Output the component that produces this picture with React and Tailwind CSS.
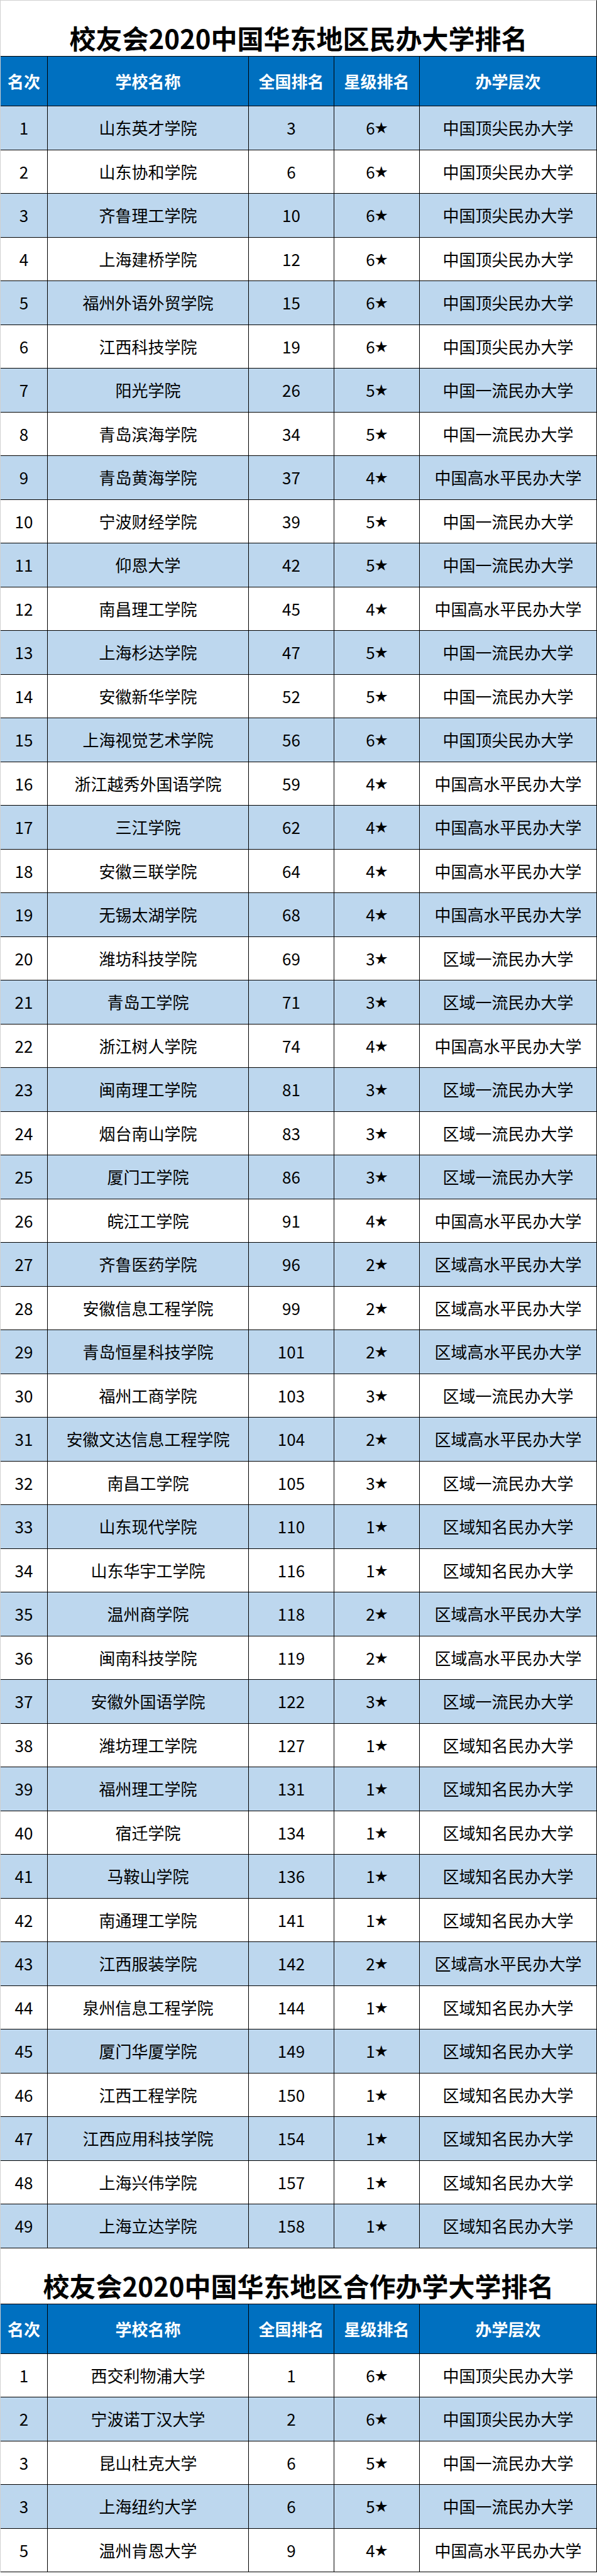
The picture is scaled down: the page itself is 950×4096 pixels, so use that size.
const minban = [
    [1, '山东英才学院', 3, 6, '中国顶尖民办大学'],
    [2, '山东协和学院', 6, 6, '中国顶尖民办大学'],
    [3, '齐鲁理工学院', 10, 6, '中国顶尖民办大学'],
    [4, '上海建桥学院', 12, 6, '中国顶尖民办大学'],
    [5, '福州外语外贸学院', 15, 6, '中国顶尖民办大学'],
    [6, '江西科技学院', 19, 6, '中国顶尖民办大学'],
    [7, '阳光学院', 26, 5, '中国一流民办大学'],
    [8, '青岛滨海学院', 34, 5, '中国一流民办大学'],
    [9, '青岛黄海学院', 37, 4, '中国高水平民办大学'],
    [10, '宁波财经学院', 39, 5, '中国一流民办大学'],
    [11, '仰恩大学', 42, 5, '中国一流民办大学'],
    [12, '南昌理工学院', 45, 4, '中国高水平民办大学'],
    [13, '上海杉达学院', 47, 5, '中国一流民办大学'],
    [14, '安徽新华学院', 52, 5, '中国一流民办大学'],
    [15, '上海视觉艺术学院', 56, 6, '中国顶尖民办大学'],
    [16, '浙江越秀外国语学院', 59, 4, '中国高水平民办大学'],
    [17, '三江学院', 62, 4, '中国高水平民办大学'],
    [18, '安徽三联学院', 64, 4, '中国高水平民办大学'],
    [19, '无锡太湖学院', 68, 4, '中国高水平民办大学'],
    [20, '潍坊科技学院', 69, 3, '区域一流民办大学'],
    [21, '青岛工学院', 71, 3, '区域一流民办大学'],
    [22, '浙江树人学院', 74, 4, '中国高水平民办大学'],
    [23, '闽南理工学院', 81, 3, '区域一流民办大学'],
    [24, '烟台南山学院', 83, 3, '区域一流民办大学'],
    [25, '厦门工学院', 86, 3, '区域一流民办大学'],
    [26, '皖江工学院', 91, 4, '中国高水平民办大学'],
    [27, '齐鲁医药学院', 96, 2, '区域高水平民办大学'],
    [28, '安徽信息工程学院', 99, 2, '区域高水平民办大学'],
    [29, '青岛恒星科技学院', 101, 2, '区域高水平民办大学'],
    [30, '福州工商学院', 103, 3, '区域一流民办大学'],
    [31, '安徽文达信息工程学院', 104, 2, '区域高水平民办大学'],
    [32, '南昌工学院', 105, 3, '区域一流民办大学'],
    [33, '山东现代学院', 110, 1, '区域知名民办大学'],
    [34, '山东华宇工学院', 116, 1, '区域知名民办大学'],
    [35, '温州商学院', 118, 2, '区域高水平民办大学'],
    [36, '闽南科技学院', 119, 2, '区域高水平民办大学'],
    [37, '安徽外国语学院', 122, 3, '区域一流民办大学'],
    [38, '潍坊理工学院', 127, 1, '区域知名民办大学'],
    [39, '福州理工学院', 131, 1, '区域知名民办大学'],
    [40, '宿迁学院', 134, 1, '区域知名民办大学'],
    [41, '马鞍山学院', 136, 1, '区域知名民办大学'],
    [42, '南通理工学院', 141, 1, '区域知名民办大学'],
    [43, '江西服装学院', 142, 2, '区域高水平民办大学'],
    [44, '泉州信息工程学院', 144, 1, '区域知名民办大学'],
    [45, '厦门华厦学院', 149, 1, '区域知名民办大学'],
    [46, '江西工程学院', 150, 1, '区域知名民办大学'],
    [47, '江西应用科技学院', 154, 1, '区域知名民办大学'],
    [48, '上海兴伟学院', 157, 1, '区域知名民办大学'],
    [49, '上海立达学院', 158, 1, '区域知名民办大学'],
]

const hezuo = [
    [1, '西交利物浦大学', 1, 6, '中国顶尖民办大学'],
    [2, '宁波诺丁汉大学', 2, 6, '中国顶尖民办大学'],
    [3, '昆山杜克大学', 6, 5, '中国一流民办大学'],
    [3, '上海纽约大学', 6, 5, '中国一流民办大学'],
    [5, '温州肯恩大学', 9, 4, '中国高水平民办大学'],
]

// 列宽 (外框左右各 1px)
const cols = 'grid grid-cols-[75px_320px_136px_136px_281px]'
const cell = 'flex items-center justify-center border-r border-black whitespace-nowrap'
const lastCell = 'flex items-center justify-center whitespace-nowrap'

const Ranking = ({ title, rows, blueFirst }) => {
    return (
        <div>
            <div className="h-[88px] flex items-end justify-center pb-[8px]">
                <h2 className="text-[42px] font-bold leading-none text-black">{title}</h2>
            </div>
            <div className={`${cols} h-[80px] bg-[#0070c0] border-y border-black text-white font-bold text-[26px] leading-none`}>
                <div className={cell}>名次</div>
                <div className={cell}>学校名称</div>
                <div className={cell}>全国排名</div>
                <div className={cell}>星级排名</div>
                <div className={lastCell}>办学层次</div>
            </div>
            {rows.map((r, i) => {
                const blue = blueFirst ? i % 2 === 0 : i % 2 === 1
                return (
                    <div
                        key={i}
                        className={`${cols} h-[69.5px] border-b border-black text-[26px] leading-none text-black ${blue ? 'bg-[#bdd7ee]' : 'bg-white'}`}
                    >
                        <div className={cell}>{r[0]}</div>
                        <div className={cell}>{r[1]}</div>
                        <div className={cell}>{r[2]}</div>
                        <div className={cell}>
                            {r[3]}<span className="text-[20px]">★</span>
                        </div>
                        <div className={lastCell}>{r[4]}</div>
                    </div>
                )
            })}
        </div>
    )
}

export default function App() {
    return (
        <div className="w-[950px] bg-white border-l border-t border-r border-[#d0d0d0] border-r-black font-['Noto_Sans_CJK_SC','Noto_Sans',sans-serif]">
            <Ranking title="校友会2020中国华东地区民办大学排名" rows={minban} blueFirst={true} />
            <Ranking title="校友会2020中国华东地区合作办学大学排名" rows={hezuo} blueFirst={false} />
        </div>
    )
}
